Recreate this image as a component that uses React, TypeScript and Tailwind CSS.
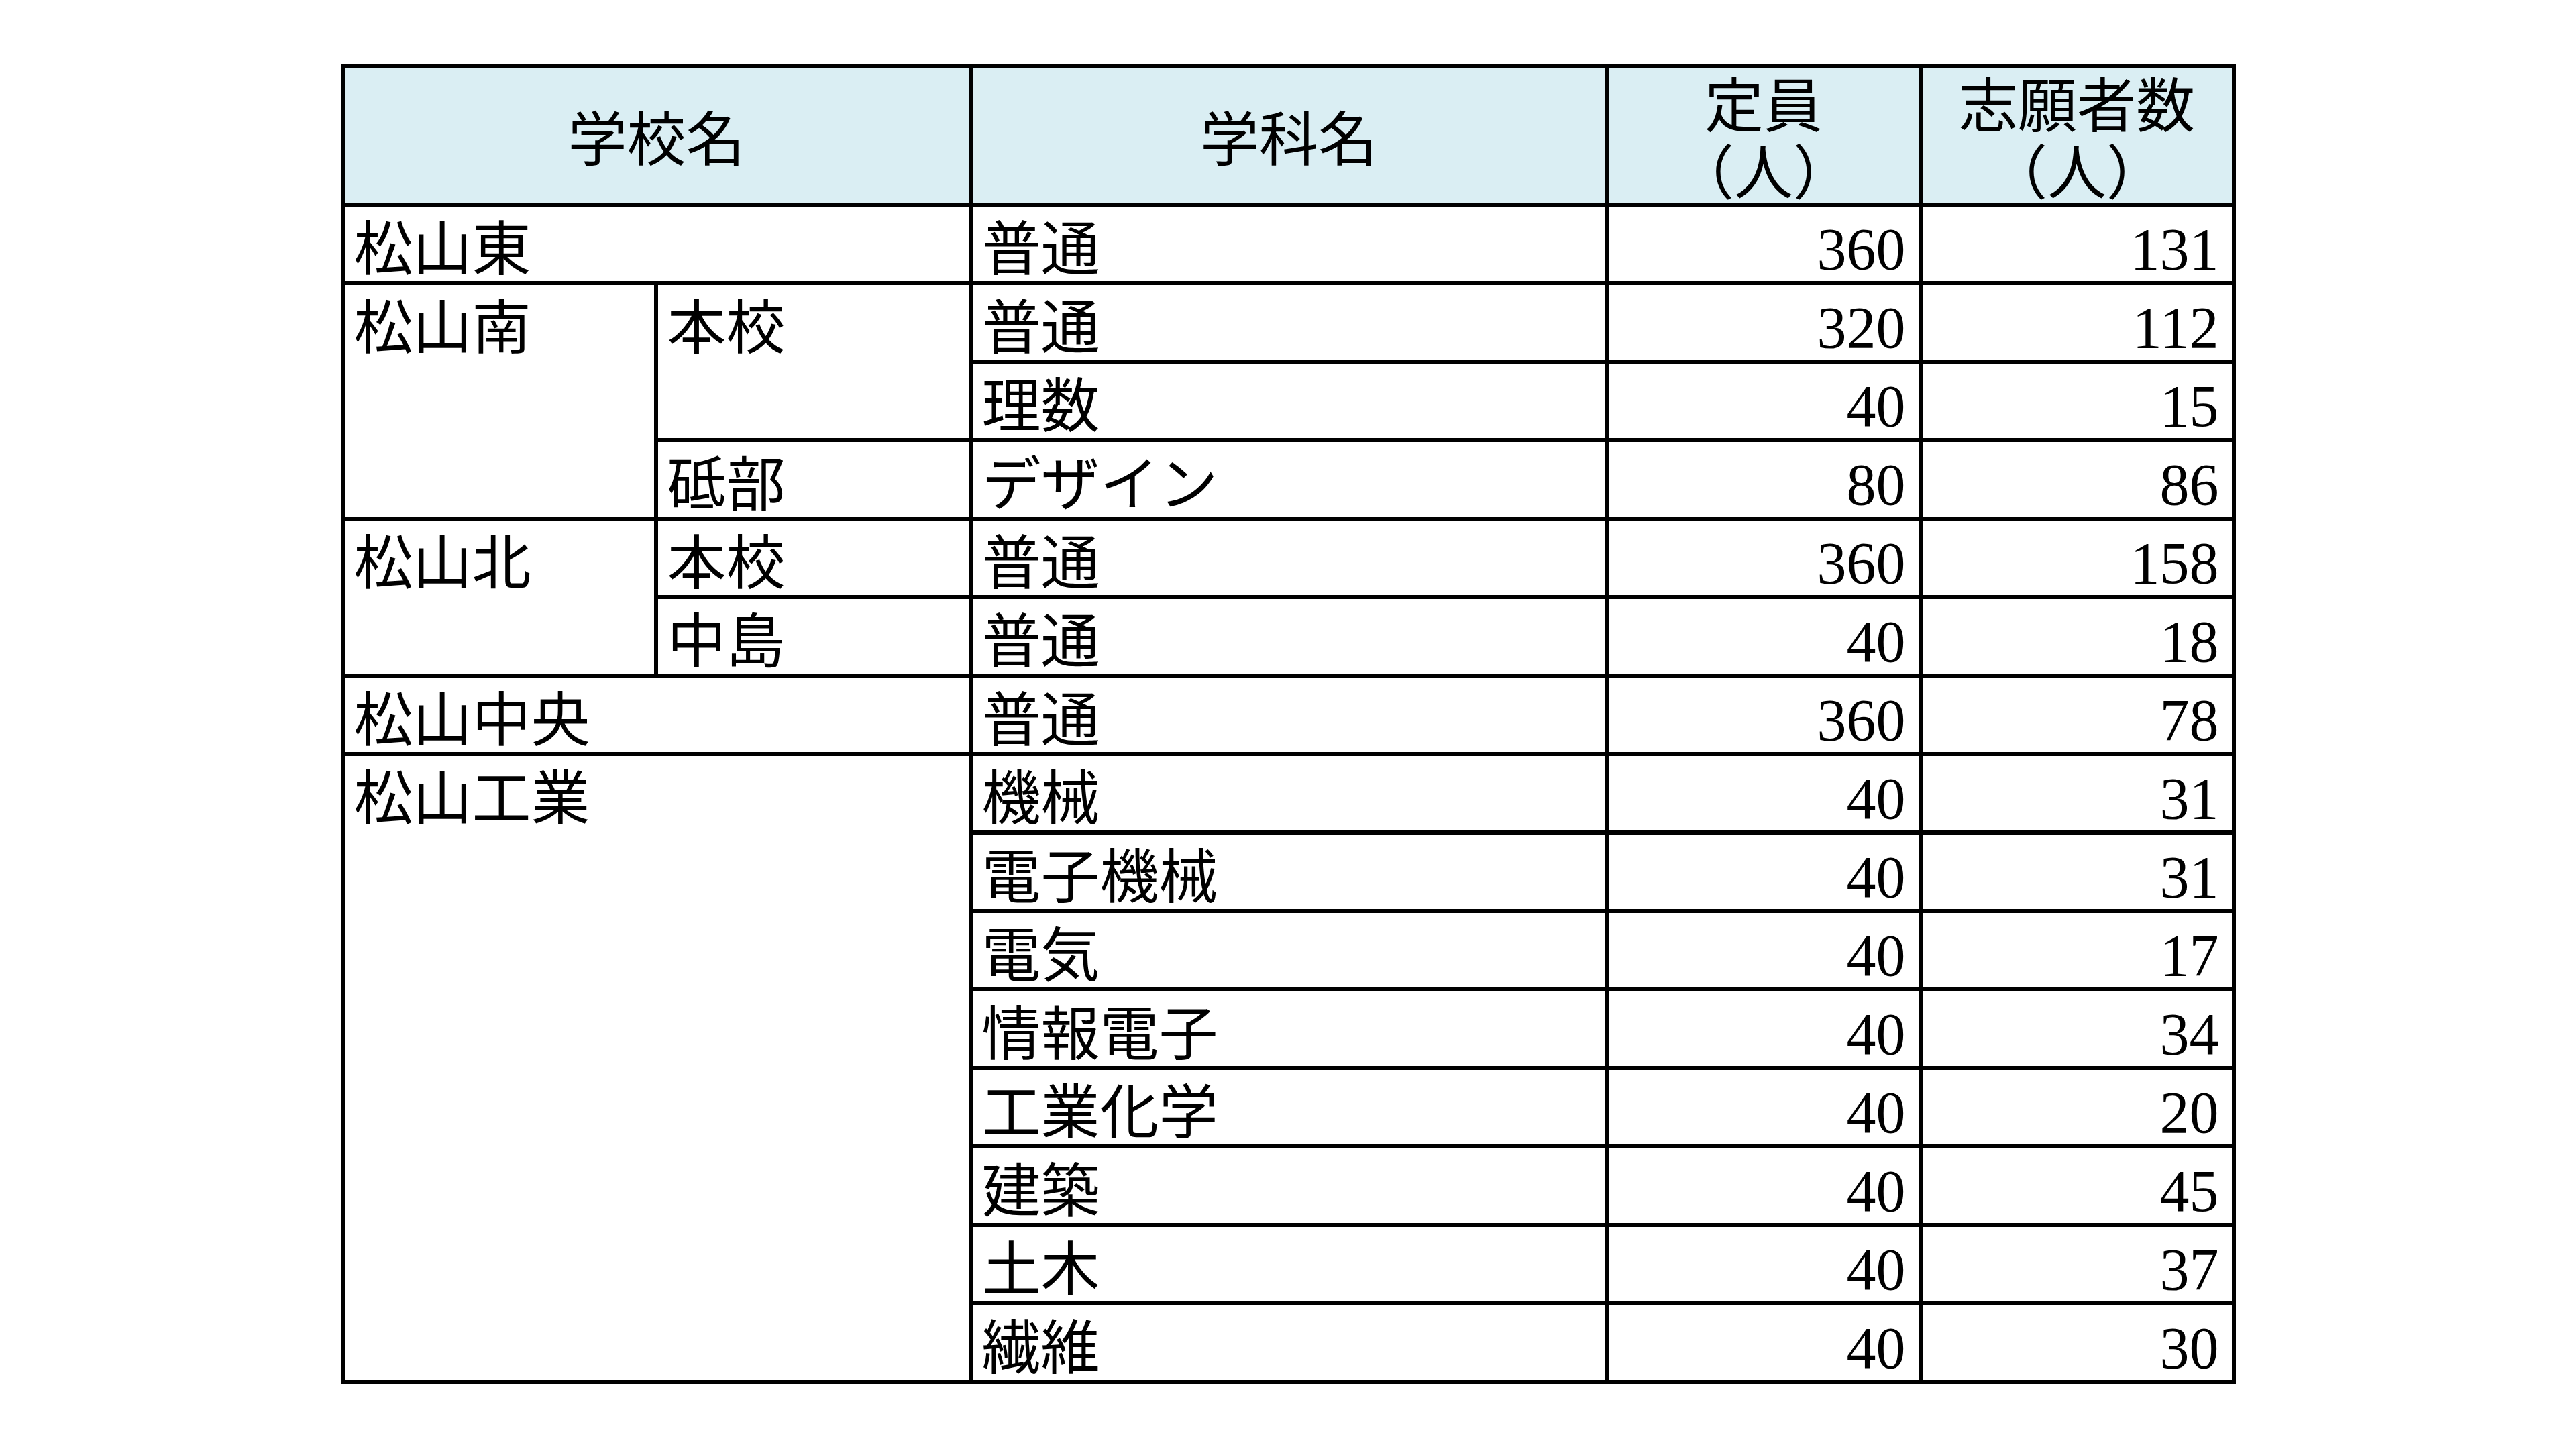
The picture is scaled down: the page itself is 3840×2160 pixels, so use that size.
import React from 'react';

type Row = {
  school?: { name: string; span?: string };
  campus?: { name: string; span?: string };
  dept: string;
  cap: number;
  apps: number;
};

const rows: Row[] = [
  { school: { name: '松山東', span: 'col-span-2' }, dept: '普通', cap: 360, apps: 131 },
  { school: { name: '松山南', span: 'row-span-3' }, campus: { name: '本校', span: 'row-span-2' }, dept: '普通', cap: 320, apps: 112 },
  { dept: '理数', cap: 40, apps: 15 },
  { campus: { name: '砥部' }, dept: 'デザイン', cap: 80, apps: 86 },
  { school: { name: '松山北', span: 'row-span-2' }, campus: { name: '本校' }, dept: '普通', cap: 360, apps: 158 },
  { campus: { name: '中島' }, dept: '普通', cap: 40, apps: 18 },
  { school: { name: '松山中央', span: 'col-span-2' }, dept: '普通', cap: 360, apps: 78 },
  { school: { name: '松山工業', span: 'col-span-2 row-span-8' }, dept: '機械', cap: 40, apps: 31 },
  { dept: '電子機械', cap: 40, apps: 31 },
  { dept: '電気', cap: 40, apps: 17 },
  { dept: '情報電子', cap: 40, apps: 34 },
  { dept: '工業化学', cap: 40, apps: 20 },
  { dept: '建築', cap: 40, apps: 45 },
  { dept: '土木', cap: 40, apps: 37 },
  { dept: '繊維', cap: 40, apps: 30 },
];

const jp = "font-['Noto_Sans_CJK_JP',sans-serif]";
const num = "font-['Liberation_Serif','Noto_Sans_CJK_JP',serif]";

const TextCell = ({ children, span = '' }: { children: React.ReactNode; span?: string }) => (
  <div className={`bg-white pl-[14px] pt-[12px] text-[88px] leading-[88px] text-black whitespace-nowrap ${jp} ${span}`}>
    {children}
  </div>
);

const NumCell = ({ value }: { value: number }) => (
  <div className={`bg-white pr-[19px] pt-[20px] text-right text-[88px] leading-[88px] text-black ${num}`}>
    {value}
  </div>
);

const HeadCell = ({ children, span = '' }: { children: React.ReactNode; span?: string }) => (
  <div className={`bg-[#daeef3] flex flex-col items-center justify-center pt-[16px] text-[88px] leading-[100px] text-black ${num} ${span}`}>
    {children}
  </div>
);

export default function App() {
  return (
    <div className="w-[3840px] h-[2160px] bg-white pt-[95px]">
      <div className="mx-auto w-[2825px] grid grid-cols-[461px_463px_943px_461px_461px] grid-rows-[201px_repeat(15,111px)] gap-[6px] p-[6px] bg-black">
        {/* header */}
        <HeadCell span="col-span-2">学校名</HeadCell>
        <HeadCell>学科名</HeadCell>
        <HeadCell>
          <span>定員</span>
          <span>（人）</span>
        </HeadCell>
        <HeadCell>
          <span>志願者数</span>
          <span>（人）</span>
        </HeadCell>

        {/* body */}
        {rows.map((r, i) => (
          <React.Fragment key={i}>
            {r.school && <TextCell span={r.school.span}>{r.school.name}</TextCell>}
            {r.campus && <TextCell span={r.campus.span}>{r.campus.name}</TextCell>}
            <TextCell>{r.dept}</TextCell>
            <NumCell value={r.cap} />
            <NumCell value={r.apps} />
          </React.Fragment>
        ))}
      </div>
    </div>
  );
}
